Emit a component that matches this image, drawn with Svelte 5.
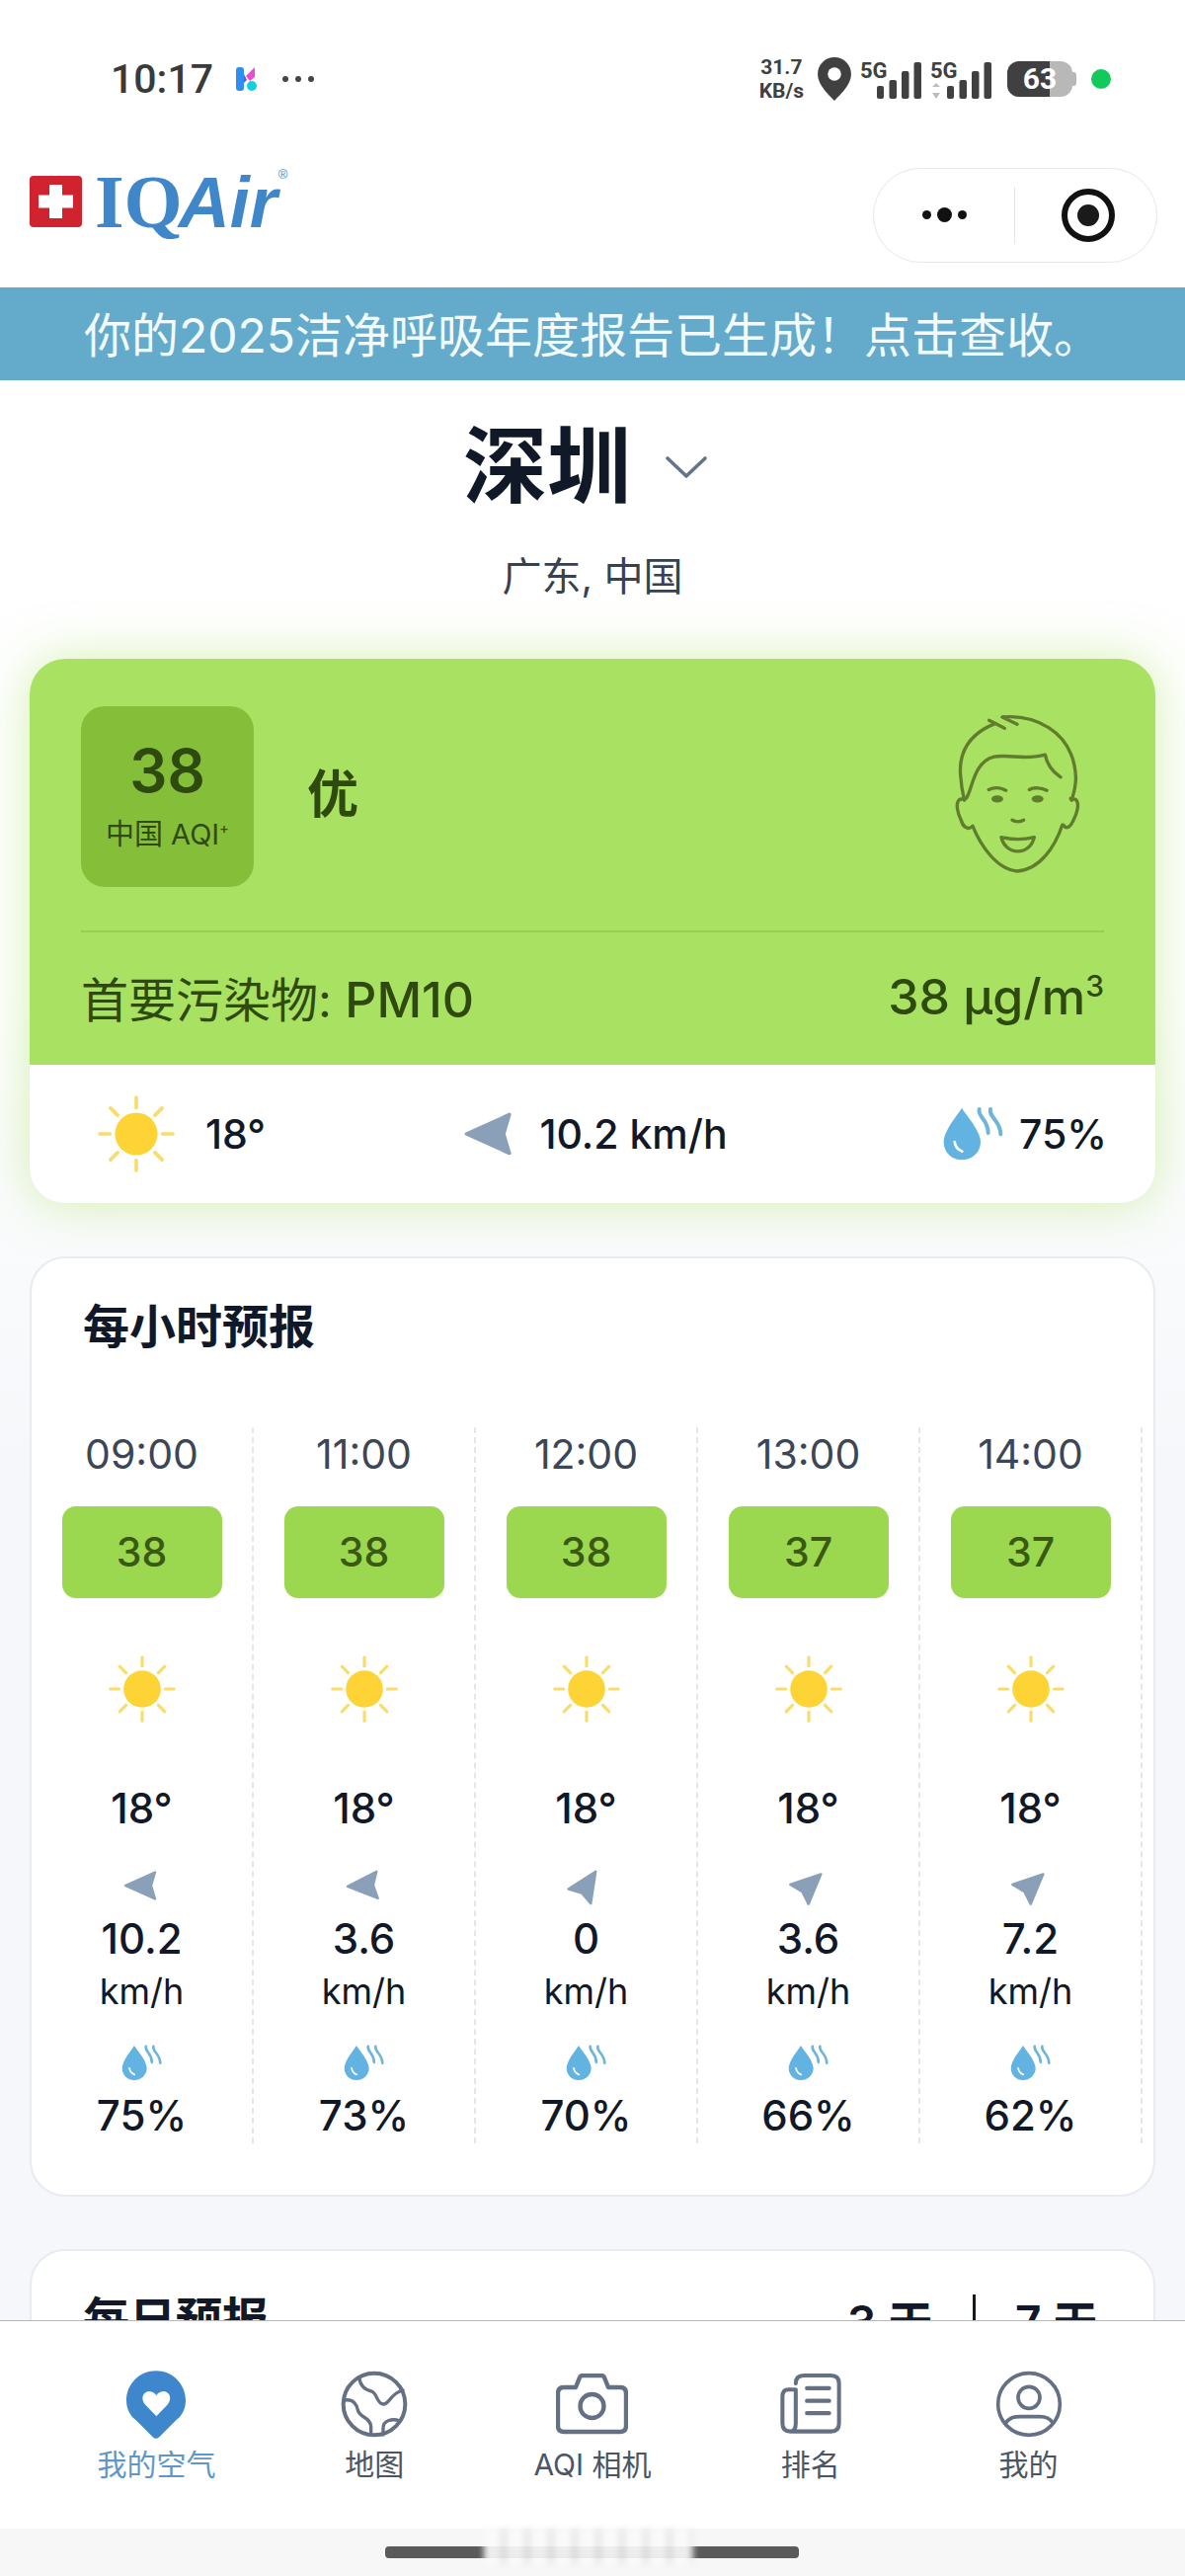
<script>
  const hours = [
    { time: "09:00", aqi: 38, wind: "10.2", dir: 0, humidity: 75 },
    { time: "11:00", aqi: 38, wind: "3.6", dir: -3, humidity: 73 },
    { time: "12:00", aqi: 38, wind: "0", dir: 123, humidity: 70 },
    { time: "13:00", aqi: 37, wind: "3.6", dir: 137, humidity: 66 },
    { time: "14:00", aqi: 37, wind: "7.2", dir: 137, humidity: 62 },
  ];
  const rayAngles = [0, 45, 90, 135, 180, 225, 270, 315];
  const navItems = ["我的空气", "地图", "AQI 相机", "排名", "我的"];
</script>

{#snippet sunIcon(size)}
  <svg width={size} height={size} viewBox="0 0 76 76">
    {#each rayAngles as angle}
      <line x1="38" y1="2" x2="38" y2="12" stroke="#f8dc6e" stroke-width="3.6" stroke-linecap="round" transform="rotate({angle} 38 38)" />
    {/each}
    <circle cx="38" cy="38" r="21" fill="#fdd335" />
  </svg>
{/snippet}

{#snippet windIcon(size, dir)}
  <svg width={size} height={size} viewBox="0 0 40 40" style="transform: rotate({dir}deg)">
    <path d="M3 20 L33 6.5 L29 20 L33 33.5 Z" fill="#8aa0b8" stroke="#8aa0b8" stroke-width="2.4" stroke-linejoin="round" />
  </svg>
{/snippet}

{#snippet dropIcon(width, height)}
  <svg {width} {height} viewBox="168 88 186 166">
    <path d="M225 92 C215 110 170 160 170 195 C170 228 195 250 225 250 C255 250 282 228 282 195 C282 160 235 110 225 92Z" fill="#62b3e2" />
    <path d="M203 195 C205 210 215 220 226 224" fill="none" stroke="#fff" stroke-width="8" stroke-linecap="round" />
    <path d="M278 96 C272 120 305 125 305 168 M312 96 C306 120 343 130 343 172" fill="none" stroke="#6fb5da" stroke-width="12" stroke-linecap="round" />
  </svg>
{/snippet}

{#snippet signal(updown)}
  <svg width="62" height="46" viewBox="0 0 62 46">
    <text x="0" y="22" class="five-g">5G</text>
    {#if updown}
      <path d="M6 27 L10 31 H2 Z M6 43 L10 37 H2 Z" fill="#bdbdbd" />
    {/if}
    <rect x="17" y="30" width="7" height="13" rx="2" fill="#404040" />
    <rect x="29.5" y="24" width="7.5" height="19" rx="2" fill="#404040" />
    <rect x="42" y="15" width="7.5" height="28" rx="2" fill="#404040" />
    <rect x="54.5" y="6" width="7.5" height="37" rx="2" fill="#404040" />
  </svg>
{/snippet}

<div class="page">
  <div class="statusbar">
    <div class="status-left">
      <span class="clock">10:17</span>
      <svg width="24" height="26" viewBox="0 0 24 26">
        <rect x="1" y="1" width="8" height="24" rx="3" fill="#2f8ff0" />
        <path d="M11 10 L20 1 V11 L15 15 Z" fill="#e84fd0" />
        <path d="M9 8 L12 14 L9 17 Z" fill="#7a4fe0" />
        <circle cx="17" cy="20" r="5" fill="#12d0e0" />
      </svg>
      <span class="status-dots"><i></i><i></i><i></i></span>
    </div>
    <div class="status-right">
      <div class="speed"><span>31.7</span><span>KB/s</span></div>
      <svg width="34" height="44" viewBox="0 0 100 130">
        <path d="M50 0 C22 0 0 22 0 50 C0 85 40 118 50 130 C60 118 100 85 100 50 C100 22 78 0 50 0 Z" fill="#404040" />
        <circle cx="50" cy="50" r="20" fill="#fff" />
      </svg>
      {@render signal(false)}
      {@render signal(true)}
      <div class="battery">
        <div class="battery-fill"></div>
        <span>63</span>
      </div>
      <div class="green-dot"></div>
    </div>
  </div>

  <header class="header">
    <div class="logo">
      <svg width="53" height="52" viewBox="0 0 53 52">
        <rect width="53" height="52" rx="4" fill="#d1232f" />
        <path d="M20 9 H33 V19.5 H44 V32.5 H33 V43 H20 V32.5 H9 V19.5 H20 Z" fill="#fff" />
      </svg>
      <span class="logo-iq">IQ</span><span class="logo-air">Air</span><span class="logo-reg">®</span>
    </div>
    <div class="capsule">
      <div class="capsule-dots"><i></i><b></b><i></i></div>
      <div class="capsule-line"></div>
      <svg width="56" height="56" viewBox="0 0 56 56">
        <circle cx="28" cy="28" r="24" fill="none" stroke="#111" stroke-width="6" />
        <circle cx="28" cy="28" r="11" fill="#1a1a1a" />
      </svg>
    </div>
  </header>

  <div class="banner">你的2025洁净呼吸年度报告已生成！点击查收。</div>

  <section class="location">
    <div class="city">
      <h1>深圳</h1>
      <svg width="44" height="24" viewBox="0 0 44 24">
        <path d="M3 3 L22 21 L41 3" fill="none" stroke="#64748b" stroke-width="3.6" stroke-linecap="round" stroke-linejoin="round" />
      </svg>
    </div>
    <div class="region">广东, 中国</div>
  </section>

  <section class="aqi-card">
    <div class="aqi-top">
      <div class="aqi-summary">
        <div class="aqi-badge">
          <div class="aqi-value">38</div>
          <div class="aqi-label">中国 AQI<sup>+</sup></div>
        </div>
        <div class="aqi-level">优</div>
        <svg class="face" width="134" height="167" viewBox="100 60 400 500">
          <g fill="none" stroke="#5f7d2c" stroke-width="10" stroke-linecap="round" stroke-linejoin="round">
            <path d="M300 100 L255 78 C340 70 470 110 478 260 C478 290 472 310 465 330" />
            <path d="M215 88 L262 112 M235 97 C150 130 125 190 128 250 C130 280 135 310 140 330" />
            <path d="M145 325 C165 300 165 215 230 198 C280 190 320 210 385 192 C390 220 410 245 432 260" />
            <path d="M140 325 L125 328 C112 340 120 370 130 390 C135 410 150 420 160 412" />
            <path d="M462 325 L478 328 C490 340 482 370 470 392 C462 410 450 420 440 405" />
            <path d="M165 408 C190 470 240 540 300 545 C370 540 415 470 437 405" />
            <path d="M214 298 C230 290 250 292 266 300 M337 298 C350 290 375 292 390 300" />
            <path d="M285 390 C295 396 310 396 320 390" />
            <path d="M252 442 C285 450 320 450 352 442 C345 470 325 485 302 485 C280 485 258 470 252 442 Z" />
          </g>
          <ellipse cx="240" cy="326" rx="18" ry="11" fill="#5f7d2c" />
          <ellipse cx="362" cy="326" rx="18" ry="11" fill="#5f7d2c" />
        </svg>
      </div>
      <div class="pollutant">
        <span>首要污染物: <em>PM10</em></span>
        <span><em>38 µg/m<sup>3</sup></em></span>
      </div>
    </div>
    <div class="aqi-bottom">
      <div class="weather-item">
        {@render sunIcon(78)}
        <span class="temp-main">18°</span>
      </div>
      <div class="weather-item wind-main">
        {@render windIcon(58, 0)}
        <span>10.2 km/h</span>
      </div>
      <div class="weather-item humidity-main">
        {@render dropIcon(62, 56)}
        <span>75%</span>
      </div>
    </div>
  </section>

  <section class="card hourly">
    <h2>每小时预报</h2>
    <div class="hour-grid">
      {#each hours as hour}
        <div class="hour-col">
          <div class="hour-time">{hour.time}</div>
          <div class="hour-badge">{hour.aqi}</div>
          <div class="hour-sun">{@render sunIcon(68)}</div>
          <div class="hour-temp">18°</div>
          <div class="hour-wind">{@render windIcon(40, hour.dir)}</div>
          <div class="hour-speed">{hour.wind}</div>
          <div class="hour-unit">km/h</div>
          <div class="hour-drop">{@render dropIcon(42, 37)}</div>
          <div class="hour-humidity">{hour.humidity}%</div>
        </div>
      {/each}
    </div>
  </section>

  <section class="card daily">
    <h2>每日预报</h2>
    <div class="range">
      <span>3 天</span>
      <span class="range-line"></span>
      <span>7 天</span>
    </div>
  </section>

  <nav class="tabbar">
    <div class="tabs">
      {#each navItems as label, i}
        <div class="tab" class:active={i === 0}>
          <div class="tab-icon">
            {#if i === 0}
              <svg width="60" height="69" viewBox="205 57 180 206">
                <path d="M295 57 C245 57 205 97 205 147 C205 175 218 195 235 208 L285 258 Q295 267 305 258 L355 208 C372 195 385 175 385 147 C385 97 345 57 295 57Z" fill="#3f87cc" />
                <path d="M296 195 L262 160 C245 140 258 118 278 120 C287 121 293 126 296 132 C299 126 305 121 314 120 C334 118 347 140 330 160 Z" fill="#fff" />
              </svg>
            {:else if i === 1}
              <svg width="68" height="68" viewBox="856 55 204 204">
                <g fill="none" stroke="#667085" stroke-linecap="round">
                  <circle cx="958" cy="157" r="94" stroke-width="12" />
                  <path stroke-width="10" d="M912 75 C915 105 935 115 950 118 C968 125 965 155 985 157 C1005 158 1005 125 1045 115" />
                  <path stroke-width="10" d="M868 145 C895 140 905 160 908 175 C915 200 945 195 948 225 L948 250" />
                  <path stroke-width="10" d="M985 250 L985 230 C985 205 1015 200 1035 208" />
                </g>
              </svg>
            {:else if i === 2}
              <svg width="73" height="62" viewBox="0 0 73 62">
                <g fill="none" stroke="#667085" stroke-width="4.4" stroke-linejoin="round">
                  <path d="M8 14 H20 L24 4 Q25 2 27 2 H46 Q48 2 49 4 L53 14 H65 Q71 14 71 20 V53 Q71 59 65 59 H8 Q2 59 2 53 V20 Q2 14 8 14 Z" />
                  <circle cx="36.5" cy="33" r="12" />
                </g>
              </svg>
            {:else if i === 3}
              <svg width="62" height="62" viewBox="453 66 184 184">
                <g fill="none" stroke="#667085" stroke-linecap="round" stroke-linejoin="round">
                  <path stroke-width="12" d="M500 96 Q500 72 524 72 H606 Q630 72 630 96 V216 Q630 240 606 240 H484 Q460 240 460 216 V136 Q460 114 478 114 H500 V216 Q500 240 484 240" />
                  <path stroke-width="13" d="M534 110 H600 M534 148 H600 M534 185 H600" />
                </g>
              </svg>
            {:else}
              <svg width="68" height="68" viewBox="1105 55 204 204">
                <g fill="none" stroke="#667085" stroke-width="11" stroke-linecap="round">
                  <circle cx="1207" cy="157" r="94" />
                  <circle cx="1207" cy="137" r="33" />
                  <path d="M1135 215 C1150 195 1165 195 1180 195 H1240 C1260 195 1270 200 1280 215" />
                </g>
              </svg>
            {/if}
          </div>
          <div class="tab-label">{label}</div>
        </div>
      {/each}
    </div>
    <div class="home-area">
      <div class="home-bar"></div>
      <div class="home-blur"></div>
    </div>
  </nav>
</div>

<style>
  :global(body) {
    margin: 0;
    background: #fff;
  }

  .page {
    position: relative;
    height: 2608px;
    overflow: hidden;
    font-family: Inter, "Noto Sans CJK SC", sans-serif;
    color: #111827;
    background: linear-gradient(#fff 0, #fff 1000px, #f5f7fa 1500px);
  }

  .statusbar {
    height: 146px;
    padding: 14px 75px 0 112px;
    box-sizing: border-box;
    display: flex;
    align-items: center;
    justify-content: space-between;
    color: #333;
  }

  .status-left {
    display: flex;
    align-items: center;
    gap: 22px;
  }

  .clock {
    font-family: Roboto, sans-serif;
    font-size: 41px;
    font-weight: 500;
    color: #3a3a3a;
  }

  .status-dots {
    display: flex;
    gap: 7px;
    margin-left: 2px;
  }

  .status-dots i {
    width: 6px;
    height: 6px;
    border-radius: 50%;
    background: #444;
  }

  .status-right {
    display: flex;
    align-items: center;
    gap: 9px;
  }

  .speed {
    display: flex;
    flex-direction: column;
    align-items: center;
    font-family: Roboto, sans-serif;
    font-size: 21px;
    font-weight: 700;
    line-height: 24px;
    color: #404040;
    margin-right: 5px;
  }

  .five-g {
    font-family: Roboto, sans-serif;
    font-size: 22px;
    font-weight: 700;
    fill: #404040;
  }

  .battery {
    position: relative;
    width: 66px;
    height: 36px;
    margin-left: 7px;
    border-radius: 12px;
    background: #b8b8b8;
    font-family: Roboto, sans-serif;
    font-size: 30px;
    font-weight: 700;
    line-height: 36px;
    color: #fff;
    text-align: center;
  }

  .battery::after {
    content: "";
    position: absolute;
    right: -4px;
    top: 11px;
    width: 4px;
    height: 14px;
    border-radius: 0 3px 3px 0;
    background: #b8b8b8;
  }

  .battery-fill {
    position: absolute;
    inset: 0 23px 0 0;
    border-radius: 12px 0 0 12px;
    background: #404040;
  }

  .battery span {
    position: relative;
  }

  .green-dot {
    width: 20px;
    height: 20px;
    margin-left: 10px;
    border-radius: 50%;
    background: #12c95b;
  }

  .header {
    height: 145px;
    padding: 0 28px 0 30px;
    box-sizing: border-box;
    display: flex;
    align-items: center;
    justify-content: space-between;
  }

  .logo {
    display: flex;
    align-items: baseline;
    color: #3f87c9;
    line-height: 1;
    margin-bottom: 30px;
  }

  .logo svg {
    align-self: center;
    margin-right: 13px;
  }

  .logo-iq {
    font-family: "Liberation Serif", serif;
    font-size: 76px;
    font-weight: 700;
  }

  .logo-air {
    font-family: "Liberation Sans", sans-serif;
    font-size: 72px;
    font-weight: 700;
    font-style: italic;
    margin-left: -4px;
  }

  .logo-reg {
    align-self: flex-start;
    font-family: "Liberation Sans", sans-serif;
    font-size: 13px;
    margin-top: 4px;
    margin-left: 1px;
  }

  .capsule {
    width: 288px;
    height: 96px;
    box-sizing: border-box;
    border: 1px solid #e8e8e8;
    border-radius: 48px;
    display: flex;
    align-items: center;
    margin-bottom: 2px;
  }

  .capsule-dots {
    width: 142px;
    display: flex;
    align-items: center;
    justify-content: center;
    gap: 6px;
  }

  .capsule-dots i {
    width: 9px;
    height: 9px;
    border-radius: 50%;
    background: #111;
  }

  .capsule-dots b {
    width: 15px;
    height: 15px;
    border-radius: 50%;
    background: #111;
  }

  .capsule-line {
    width: 1px;
    height: 58px;
    background: #e6e6e6;
    margin-right: 46px;
  }

  .banner {
    height: 94px;
    padding-bottom: 4px;
    box-sizing: border-box;
    display: flex;
    align-items: center;
    justify-content: center;
    background: #64abcb;
    color: #f3fbff;
    font-size: 48px;
    white-space: nowrap;
  }

  .location {
    height: 282px;
    padding-top: 40px;
    box-sizing: border-box;
    display: flex;
    flex-direction: column;
    align-items: center;
  }

  .city {
    display: flex;
    align-items: center;
    gap: 34px;
    padding-right: 14px;
  }

  .city h1 {
    margin: 0;
    font-size: 85px;
    line-height: 96px;
    font-weight: 600;
    color: #111827;
  }

  .region {
    margin-top: 38px;
    font-size: 40px;
    line-height: 50px;
    color: #374151;
  }

  .aqi-card {
    margin: 0 30px;
    height: 551px;
    border-radius: 36px;
    background: #fff;
    box-shadow: 0 0 50px rgba(170, 225, 100, 0.5);
    overflow: hidden;
    display: flex;
    flex-direction: column;
  }

  .aqi-top {
    height: 411px;
    padding: 48px 52px 0;
    box-sizing: border-box;
    background: #a9e263;
    color: #2f4a0e;
  }

  .aqi-summary {
    height: 227px;
    display: flex;
    align-items: flex-start;
    border-bottom: 2px solid #97cf55;
  }

  .aqi-badge {
    width: 175px;
    height: 183px;
    border-radius: 24px;
    background: #85bf3a;
    display: flex;
    flex-direction: column;
    align-items: center;
  }

  .aqi-value {
    margin-top: 30px;
    font-size: 60px;
    line-height: 70px;
    font-weight: 600;
  }

  .aqi-label {
    margin-top: 12px;
    font-size: 29px;
    line-height: 36px;
  }

  .aqi-label sup {
    font-size: 15px;
    line-height: 0;
  }

  .aqi-level {
    margin: 57px 0 0 54px;
    font-size: 52px;
    line-height: 66px;
    font-weight: 600;
  }

  .face {
    margin: 5px 21px 0 auto;
  }

  .pollutant {
    display: flex;
    justify-content: space-between;
    align-items: center;
    height: 130px;
    font-size: 48px;
    white-space: nowrap;
  }

  .pollutant em {
    font-style: normal;
    font-size: 50px;
    font-weight: 500;
  }

  .pollutant sup {
    font-size: 30px;
    line-height: 0;
  }

  .aqi-bottom {
    flex: 1;
    padding: 0 49px 0 69px;
    display: flex;
    align-items: center;
    justify-content: space-between;
    font-size: 41px;
    font-weight: 500;
    color: #111827;
  }

  .weather-item {
    display: flex;
    align-items: center;
  }

  .temp-main {
    margin-left: 31px;
  }

  .wind-main {
    gap: 20px;
    margin-left: -19px;
  }

  .humidity-main {
    gap: 15px;
  }

  .card {
    margin: 0 30px;
    box-sizing: border-box;
    border: 2px solid #e8ebef;
    border-radius: 36px;
    background: #fff;
  }

  .card h2 {
    margin: 0;
    font-size: 47px;
    line-height: 60px;
    font-weight: 600;
    color: #111827;
  }

  .hourly {
    height: 952px;
    margin-top: 54px;
  }

  .hourly h2 {
    padding: 39px 0 0 52px;
  }

  .hour-grid {
    display: grid;
    grid-template-columns: repeat(5, 225px);
    margin-top: 72px;
  }

  .hour-col {
    height: 725px;
    display: flex;
    flex-direction: column;
    align-items: center;
    border-right: 2px dashed #e3e6ea;
    box-sizing: border-box;
  }

  .hour-time {
    font-size: 41px;
    line-height: 54px;
    color: #3b4658;
  }

  .hour-badge {
    width: 162px;
    height: 93px;
    margin-top: 26px;
    border-radius: 14px;
    background: #9cd84f;
    color: #3a5a14;
    font-size: 41px;
    font-weight: 500;
    line-height: 93px;
    text-align: center;
  }

  .hour-sun {
    height: 80px;
    margin-top: 52px;
    display: flex;
    align-items: center;
  }

  .hour-temp {
    margin-top: 56px;
    font-size: 42px;
    line-height: 50px;
    font-weight: 500;
  }

  .hour-wind {
    height: 40px;
    margin-top: 33px;
  }

  .hour-speed {
    margin-top: 9px;
    font-size: 42px;
    line-height: 50px;
    font-weight: 500;
  }

  .hour-unit {
    margin-top: 8px;
    font-size: 36px;
    line-height: 40px;
  }

  .hour-drop {
    height: 40px;
    margin-top: 32px;
    display: flex;
    align-items: center;
  }

  .hour-humidity {
    margin-top: 9px;
    font-size: 42px;
    line-height: 50px;
    font-weight: 500;
  }

  .daily {
    height: 400px;
    margin-top: 53px;
    padding: 39px 56px 0 52px;
    display: flex;
    justify-content: space-between;
    align-items: flex-start;
  }

  .range {
    display: flex;
    align-items: center;
    height: 60px;
    gap: 40px;
    font-size: 46px;
    font-weight: 600;
  }

  .range-line {
    width: 3px;
    height: 50px;
    background: #111827;
  }

  .tabbar {
    position: absolute;
    left: 0;
    right: 0;
    bottom: 0;
    height: 259px;
    box-sizing: border-box;
    border-top: 1px solid #b8b8b8;
    background: #fff;
    display: flex;
    flex-direction: column;
  }

  .tabs {
    flex: 1;
    padding: 49px 48px 0;
    display: grid;
    grid-template-columns: repeat(5, 1fr);
  }

  .tab {
    display: flex;
    flex-direction: column;
    align-items: center;
  }

  .tab-icon {
    height: 70px;
    display: flex;
    align-items: center;
    justify-content: center;
  }

  .tab-label {
    margin-top: 6px;
    font-size: 30px;
    line-height: 40px;
    color: #4b5563;
    white-space: nowrap;
  }

  .tab.active .tab-label {
    color: #5f97c8;
  }

  .home-area {
    position: relative;
    height: 48px;
    background: #f7f7f7;
  }

  .home-bar {
    position: absolute;
    left: 390px;
    top: 18px;
    width: 419px;
    height: 12px;
    border-radius: 4px;
    background: #5a5a5a;
  }

  .home-blur {
    position: absolute;
    left: 490px;
    top: 0;
    width: 212px;
    height: 36px;
    background: repeating-linear-gradient(90deg, rgba(250, 250, 250, 0.92) 0 16px, rgba(232, 232, 232, 0.92) 16px 24px);
    filter: blur(3px);
  }
</style>
